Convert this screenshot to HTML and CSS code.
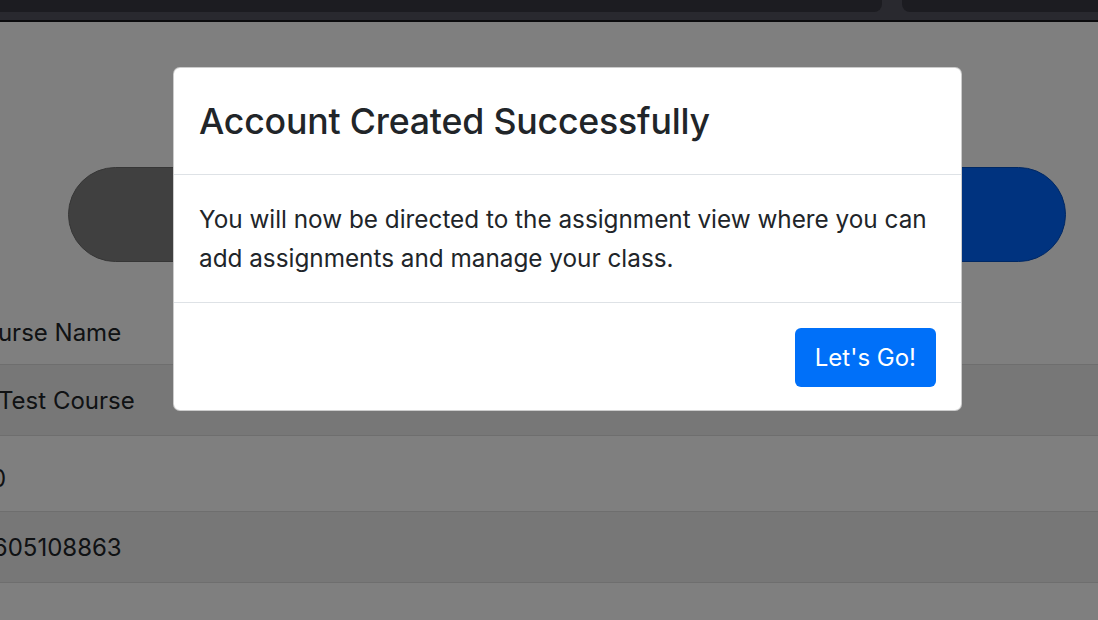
FILE: index.html
```html
<!DOCTYPE html>
<html lang="en">
<head>
    <meta charset="UTF-8">
    <title>Create Class</title>
    <link rel="stylesheet" href="styles.css">
</head>
<body>
    <div class="chrome">
        <div class="tab tab-left"></div>
        <div class="tab tab-right"></div>
    </div>

    <div class="viewport">
        <div class="page">
            <div class="actions">
                <button class="pill pill-dark" aria-label="Back"></button>
                <button class="pill pill-blue" aria-label="Create"></button>
            </div>

            <table class="details">
                <tr><td class="first"><span class="cut-name">Course Name</span></td></tr>
                <tr class="striped"><td><span class="cut-course">Test Course</span></td></tr>
                <tr><td class="tall"><span class="cut-id">0</span></td></tr>
                <tr class="striped"><td><span class="cut-num">1605108863</span></td></tr>
                <tr><td class="last"><span class="cut-last">Teacher Link</span></td></tr>
            </table>
        </div>

        <div class="backdrop">
            <div class="modal">
                <div class="modal-header">
                    <h2>Account Created Successfully</h2>
                </div>
                <div class="modal-body">
                    <p>You will now be directed to the assignment view where you can add assignments and manage your class.</p>
                </div>
                <div class="modal-footer">
                    <button class="btn-go">Let's Go!</button>
                </div>
            </div>
        </div>
    </div>
</body>
</html>
```

FILE: styles.css
```css
body {
    margin: 0;
    font-family: Inter, "Noto Sans", sans-serif;
    color: #212529;
    background-color: #1c1c22;
    overflow: hidden;
}

/* browser chrome */
.chrome {
    display: flex;
    gap: 20px;
    height: 20px;
    background-color: #29292f;
    border-bottom: 2px solid #0b0b0d;
}
.tab {
    height: 12px;
    background-color: #1c1c21;
}
.tab-left {
    width: 882px;
    border-radius: 0 0 8px 0;
}
.tab-right {
    flex: 1;
    border-radius: 0 0 0 8px;
}

.viewport {
    position: relative;
    height: 598px;
    overflow: hidden;
    background-color: white;
}
.page {
    margin-left: -40px;
    width: 1200px;
}

.actions {
    display: flex;
    gap: 40px;
    padding: 145px 0 0 108px;
}
.pill {
    width: 480px;
    height: 95px;
    border-radius: 48px;
}
.pill-dark {
    background-color: #818181;
    border: 1px solid #6c6c6c;
}
.pill-blue {
    width: 478px;
    background-color: #0066fe;
    border: 1px solid #0050c8;
}

.details {
    width: 100%;
    margin-top: 30px;
    border-collapse: collapse;
    font-size: 24px;
}
.details td {
    height: 70px;
    padding: 0 0 0 9px;
    border-top: 1px solid #dddddd;
}
.details td.first {
    height: 64px;
    padding-top: 8px;
    border-top: none;
}
.details td.tall {
    height: 65px;
    padding-top: 10px;
}
.details .striped td {
    background-color: #efefef;
}
.cut-name {
    margin-left: -3px;
}
.cut-course {
    margin-left: 29px;
}
.cut-id {
    margin-left: 22px;
}
.cut-num {
    margin-left: 14px;
}
.details td.last {
    vertical-align: top;
    padding-top: 35px;
}

/* modal */
.backdrop {
    position: absolute;
    inset: 0;
    background-color: rgba(0, 0, 0, 0.5);
}
.modal {
    width: 787px;
    margin: 45px 0 0 173px;
    background-color: white;
    border: 1px solid rgba(0, 0, 0, 0.2);
    border-radius: 7px;
}
.modal-header {
    padding: 26px 25px;
    border-bottom: 1px solid #dee2e6;
}
.modal-header h2 {
    margin: 0;
    font-size: 35.7px;
    font-weight: 500;
    line-height: 54px;
    letter-spacing: -0.2px;
}
.modal-body {
    padding: 25px 25px 24px;
    font-size: 24.3px;
    line-height: 39px;
}
.modal-body p {
    margin: 0;
}
.modal-footer {
    display: flex;
    justify-content: flex-end;
    padding: 25px 25px 23px;
    border-top: 1px solid #dee2e6;
}
.btn-go {
    padding: 10px 20px;
    font-family: inherit;
    font-size: 24px;
    line-height: 39px;
    color: white;
    background-color: #0070f9;
    border: none;
    border-radius: 6px;
}
```
